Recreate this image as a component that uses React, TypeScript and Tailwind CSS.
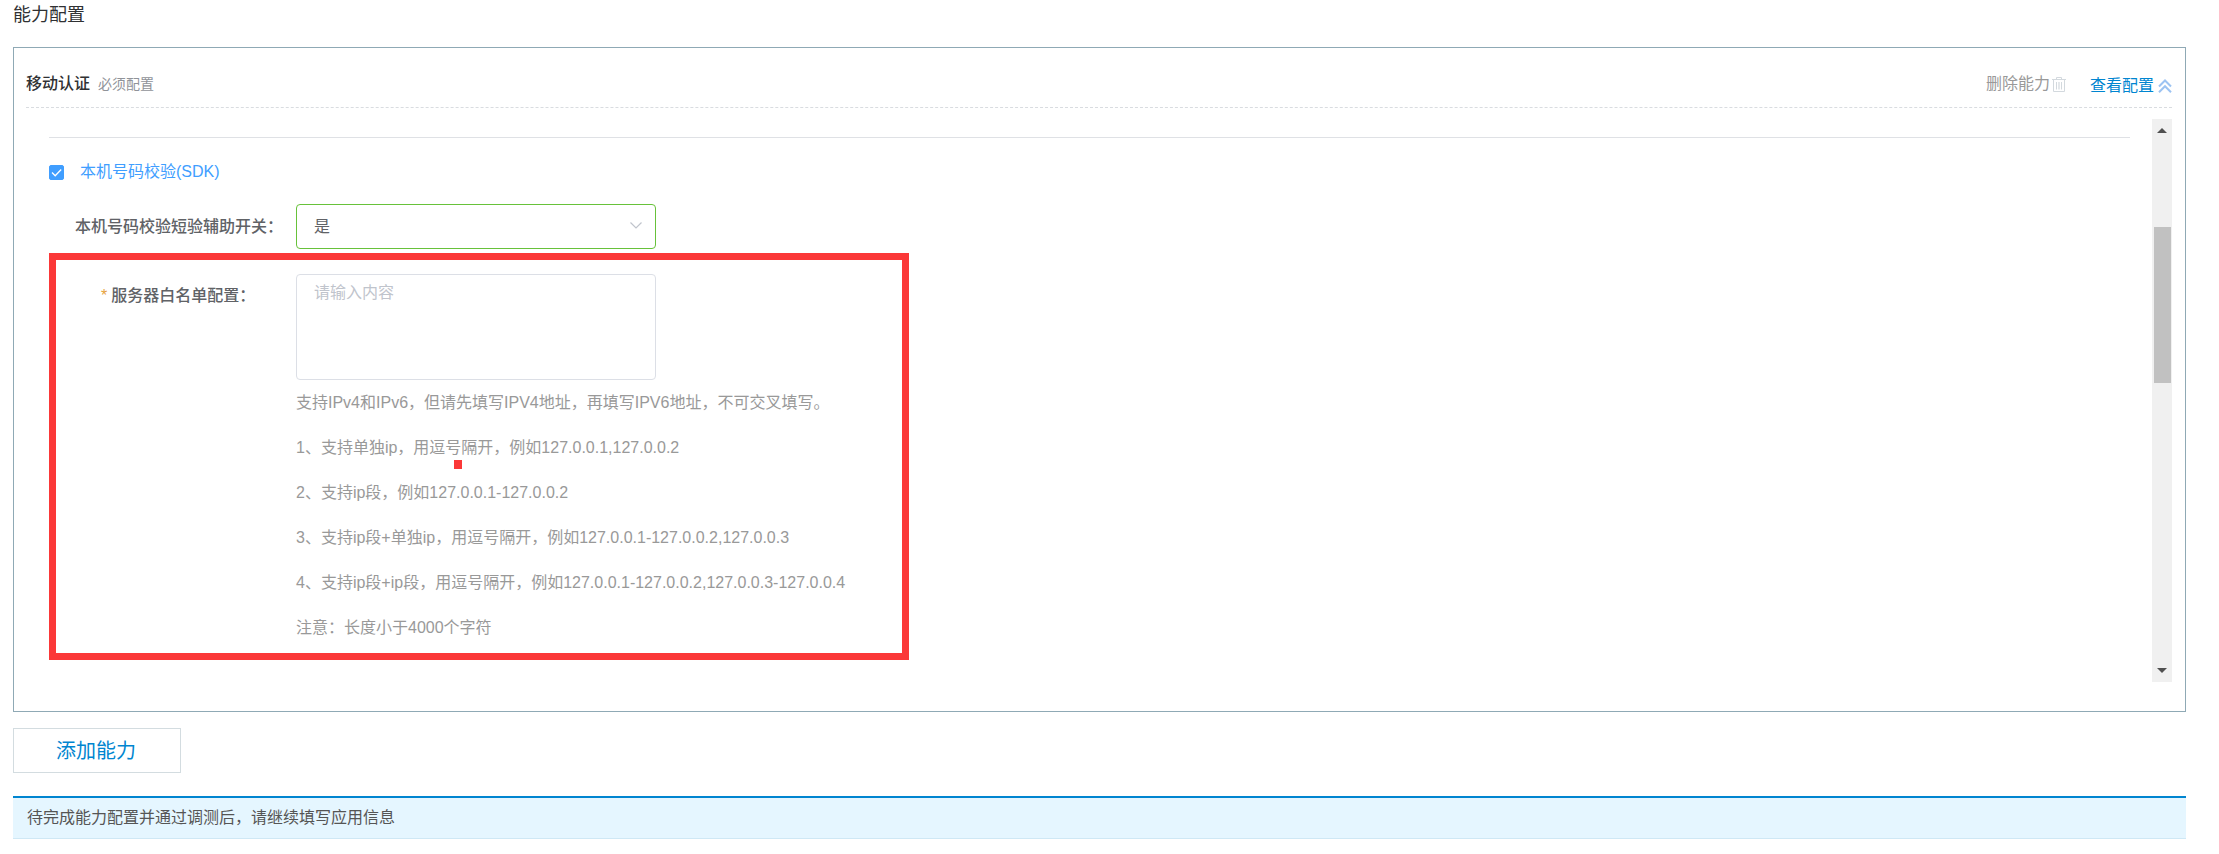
import React, { useState } from "react";

const HINTS = [
  "支持IPv4和IPv6，但请先填写IPV4地址，再填写IPV6地址，不可交叉填写。",
  "1、支持单独ip，用逗号隔开，例如127.0.0.1,127.0.0.2",
  "2、支持ip段，例如127.0.0.1-127.0.0.2",
  "3、支持ip段+单独ip，用逗号隔开，例如127.0.0.1-127.0.0.2,127.0.0.3",
  "4、支持ip段+ip段，用逗号隔开，例如127.0.0.1-127.0.0.2,127.0.0.3-127.0.0.4",
  "注意：长度小于4000个字符",
];

function TrashIcon() {
  return (
    <svg aria-hidden="true" viewBox="0 0 14 16" className="h-4 w-3.5" fill="none" stroke="#d3d9de">
      <path d="M0 3.5h14M4.5 3V1.5h5V3M1.5 4v11.5h11V4M4.5 6v7.5M9.5 6v7.5" />
      <path d="M7 6v7.5" strokeWidth="1.2" />
    </svg>
  );
}

function DoubleUpIcon() {
  return (
    <svg aria-hidden="true" viewBox="0 0 14 14" className="size-3.5" fill="none" stroke="#9cc3f2" strokeWidth="2">
      <path d="M1 7.5 7 1.5l6 6M1 13.2l6-6 6 6" />
    </svg>
  );
}

function ScrollRail() {
  return (
    <div aria-hidden="true" className="flex w-5 shrink-0 flex-col items-center bg-[#f0f0f0] py-[9px]">
      <svg viewBox="0 0 10 5" className="h-[5px] w-2.5 fill-[#505050]">
        <path d="M5 0l5 5H0z" />
      </svg>
      <div className="mt-[94px] h-39 w-[17px] bg-[#c1c1c1]" />
      <svg viewBox="0 0 10 5" className="mt-auto h-[5px] w-2.5 fill-[#505050]">
        <path d="M0 0h10L5 5z" />
      </svg>
    </div>
  );
}

export default function App() {
  const [checked, setChecked] = useState(true);
  const [whitelist, setWhitelist] = useState("");

  return (
    <main
      lang="zh-CN"
      className="bg-white pr-[33px] pb-[15px] pl-[13px] font-['Liberation_Sans','Noto_Sans_CJK_SC',sans-serif] text-base leading-6 text-[#606266]"
    >
      <h1 className="pt-[3px] text-lg leading-6 text-[#303133]">能力配置</h1>

      <section className="mt-5 border border-[#8fa9b5] pr-[13px] pb-[29px] pl-3">
        <header className="flex h-[60px] items-center justify-between border-b border-dashed border-[#d9dce0] pt-3">
          <div className="flex items-center gap-2">
            <h2 className="font-medium text-[#303133]">移动认证</h2>
            <span className="text-sm text-[#909399]">必须配置</span>
          </div>
          <div className="flex items-center gap-6">
            <button type="button" className="flex items-center gap-0.5 text-[#999999]">
              删除能力
              <TrashIcon />
            </button>
            <button type="button" className="flex items-center gap-1 pt-1 text-[#0085d0]">
              查看配置
              <DoubleUpIcon />
            </button>
          </div>
        </header>

        <div className="mt-[11px] flex">
          <div className="min-w-0 flex-1 pr-[22px] pb-[22px] pl-[23px]">
            <hr className="mt-[18px] border-[#dfe1e5]" />

            <label className="mt-[22px] flex w-fit items-center gap-4 text-[#409eff]">
              <span className="relative flex">
                <input
                  type="checkbox"
                  checked={checked}
                  onChange={(e) => setChecked(e.target.checked)}
                  className="size-[15px] appearance-none rounded-xs border border-[#409eff] bg-white checked:bg-[#409eff]"
                />
                <svg
                  aria-hidden="true"
                  viewBox="0 0 15 15"
                  className="pointer-events-none absolute inset-0 size-[15px]"
                  fill="none"
                  stroke="white"
                  strokeWidth="1.3"
                >
                  <path d="M3 7.5l3.2 3.2 6-6.2" />
                </svg>
              </span>
              本机号码校验(SDK)
            </label>

            <div className="mt-5 flex items-center">
              <label htmlFor="assist" className="w-[247px] pl-[26px] font-medium">
                本机号码校验短验辅助开关：
              </label>
              <div className="relative w-[360px]">
                <select
                  id="assist"
                  className="block h-[45px] w-full appearance-none rounded-sm border border-[#67c23a] bg-white px-[17px]"
                >
                  <option>是</option>
                  <option>否</option>
                </select>
                <svg
                  aria-hidden="true"
                  viewBox="0 0 12 7"
                  className="pointer-events-none absolute top-[18px] right-3.5 h-[7px] w-3"
                  fill="none"
                  stroke="#c0c4cc"
                  strokeWidth="1.2"
                >
                  <path d="M0.5 0.5 6 6l5.5-5.5" />
                </svg>
              </div>
            </div>

            <div className="relative mt-1 flex w-[860px] border-7 border-[#fb3838] pt-3.5 pb-[3px]">
              <label htmlFor="whitelist" className="flex w-60 shrink-0 gap-1 pt-2.5 pl-[45px] font-medium">
                <span className="text-[#e6a23c]">*</span>
                服务器白名单配置：
              </label>
              <div>
                <textarea
                  id="whitelist"
                  value={whitelist}
                  onChange={(e) => setWhitelist(e.target.value)}
                  placeholder="请输入内容"
                  className="block h-[106px] w-[360px] resize-none rounded-sm border border-[#dcdfe6] px-[17px] py-1.5 placeholder:text-[#c0c4cc]"
                />
                <div className="leading-[45px] text-[#999999]">
                  {HINTS.map((hint) => (
                    <p key={hint}>{hint}</p>
                  ))}
                </div>
              </div>
              <span className="absolute top-[200px] left-[398px] h-[9px] w-2 bg-[#fb3838]" />
            </div>
          </div>
          <ScrollRail />
        </div>
      </section>

      <button
        type="button"
        className="mt-4 block h-[45px] w-[168px] border border-[#d3dce0] pr-[50px] pl-[42px] text-xl whitespace-nowrap text-[#0085d0]"
      >
        添加能力
      </button>

      <p className="mt-[23px] border-t-2 border-b border-t-[#0085d0] border-b-[#cfe8f5] bg-[#e5f6ff] px-3.5 py-2 text-[#555555]">
        待完成能力配置并通过调测后，请继续填写应用信息
      </p>
    </main>
  );
}
